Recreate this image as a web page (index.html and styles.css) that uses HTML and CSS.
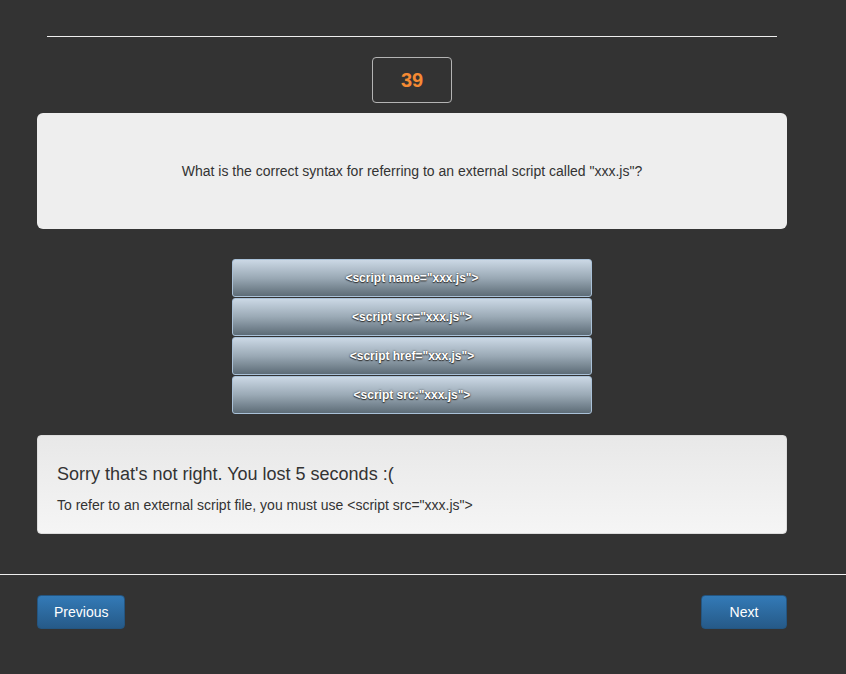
FILE: index.html
```html
<!DOCTYPE html>
<html>
<head>
<meta charset="utf-8">
<link rel="stylesheet" href="styles.css">
</head>
<body>
<div class="page">
  <div class="container">
    <hr class="top-rule">
    <div class="counter-row"><div class="counter">39</div></div>
    <div class="question">What is the correct syntax for referring to an external script called "xxx.js"?</div>
    <div class="answers">
      <div class="answer">&lt;script name="xxx.js"&gt;</div>
      <div class="answer">&lt;script src="xxx.js"&gt;</div>
      <div class="answer">&lt;script href="xxx,js"&gt;</div>
      <div class="answer">&lt;script src:"xxx.js"&gt;</div>
    </div>
    <div class="feedback">
      <h3 class="feedback-title">Sorry that's not right. You lost 5 seconds :(</h3>
      <p class="feedback-text">To refer to an external script file, you must use &lt;script src="xxx.js"&gt;</p>
    </div>
  </div>
  <hr class="bottom-rule">
  <div class="container nav">
    <button class="btn">Previous</button>
    <button class="btn btn-next">Next</button>
  </div>
</div>
</body>
</html>
```

FILE: styles.css
```css
html, body {
  margin: 0;
  padding: 0;
  background: #333333;
  font-family: "Liberation Sans", Arial, sans-serif;
  color: #333;
}
.page {
  width: 846px;
  height: 674px;
  overflow: hidden;
}
.container {
  width: 750px;
  margin-left: 37px;
}
.top-rule {
  margin: 36px 10px 0 10px;
  border: 0;
  border-top: 1px solid #eeeeee;
  height: 0;
}
.counter-row {
  display: flex;
  justify-content: center;
  margin-top: 20px;
}
.counter {
  box-sizing: border-box;
  width: 80px;
  height: 46px;
  border: 1px solid #b4b4b4;
  border-radius: 4px;
  color: #f58a33;
  font-weight: bold;
  font-size: 20px;
  display: flex;
  align-items: center;
  justify-content: center;
}
.question {
  box-sizing: border-box;
  margin-top: 10px;
  height: 116px;
  background: #eeeeee;
  border-radius: 6px;
  display: flex;
  align-items: center;
  justify-content: center;
  font-size: 14px;
  color: #333;
}
.answers {
  margin: 30px auto 0 auto;
  width: 360px;
  display: flex;
  flex-direction: column;
  gap: 1px;
}
.answer {
  box-sizing: border-box;
  height: 38px;
  border: 1px solid #a9c1d8;
  border-radius: 3px;
  background: linear-gradient(to bottom, #cbd8e5 0%, #9aa9b5 50%, #5d6c77 100%);
  color: #ffffff;
  font-weight: bold;
  font-size: 12px;
  text-shadow: 0 0 2px #333, 0 1px 1px #333;
  display: flex;
  align-items: center;
  justify-content: center;
}
.feedback {
  box-sizing: border-box;
  margin-top: 21px;
  height: 99px;
  border-radius: 4px;
  border: 1px solid #dcdcdc;
  background: linear-gradient(to bottom, #e8e8e8, #f5f5f5);
  padding: 27px 19px 0 19px;
}
.feedback-title {
  margin: 0;
  font-weight: normal;
  font-size: 18px;
  line-height: 22px;
  color: #333;
}
.feedback-text {
  margin: 10px 0 0 0;
  font-size: 14px;
  line-height: 20px;
  color: #333;
}
.bottom-rule {
  margin: 40px 0 0 0;
  border: 0;
  border-top: 1px solid #eeeeee;
  height: 0;
}
.nav {
  display: flex;
  justify-content: space-between;
  margin-top: 20px;
}
.btn {
  box-sizing: border-box;
  height: 34px;
  padding: 0 16px;
  font-family: "Liberation Sans", Arial, sans-serif;
  font-size: 14px;
  color: #fff;
  border: 1px solid #245580;
  border-radius: 4px;
  background: linear-gradient(to bottom, #337ab7 0%, #265a88 100%);
}
.btn-next {
  width: 86px;
}
```
